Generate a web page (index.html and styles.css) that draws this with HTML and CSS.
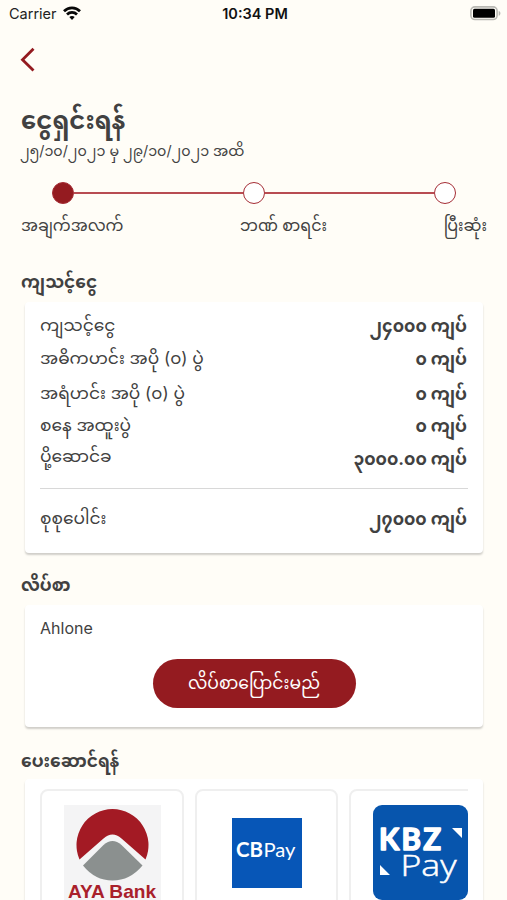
FILE: index.html
```html
<!DOCTYPE html>
<html lang="my">
<head>
<meta charset="utf-8">
<title>ငွေရှင်းရန်</title>
<link rel="stylesheet" href="styles.css">
</head>
<body>
<div class="status">
  <div class="carrier"><span>Carrier</span>
    <svg width="18" height="15" viewBox="0 0 18 15" fill="none" stroke="#080808" stroke-width="2.7"><path d="M1 5.200C5.400.7 12.600.7 17 5.200"/><path d="M4 8.500c2.800-2.800 7.200-2.800 10 0"/><path d="M9 14l-2.700-2.900c1.500-1.400 3.900-1.400 5.400 0z" fill="#080808" stroke="none"/></svg>
  </div>
  <span class="time">10:34 PM</span>
  <svg class="battery" width="31" height="15" viewBox="0 0 31 15"><rect x=".9" y=".9" width="26.200" height="12.600" rx="4" fill="#fffdf7" stroke="#b9b8b3" stroke-width="1.600"/><rect x="3" y="2.700" width="22" height="9" rx="1.500" fill="#000"/><path d="M28.700 5c2.300.7 2.300 4 0 4.800z" fill="#b9b8b3"/></svg>
</div>
<div class="back"><svg width="16" height="26" viewBox="0 0 16 26" fill="none" stroke="#941b20" stroke-width="2.800"><path d="M13.500 1.700 2.500 12.800l11 10.800"/></svg></div>
<h1><span>ငွေရှင်းရန်</span></h1>
<p class="dates"><span>၂၅/၁၀/၂၀၂၁ မှ ၂၉/၁၀/၂၀၂၁ အထိ</span></p>
<div class="steps"><i class="dot done"></i><i class="line"></i><i class="dot"></i><i class="line"></i><i class="dot"></i></div>
<div class="step-labels"><span>အချက်အလက်</span><span>ဘဏ် စာရင်း</span><span>ပြီးဆုံး</span></div>
<h2 class="cost-title"><span>ကျသင့်ငွေ</span></h2>
<section class="card cost">
  <div class="row"><span>ကျသင့်ငွေ</span><b>၂၄၀၀၀ ကျပ်</b></div>
  <div class="row"><span>အဓိကဟင်း အပို (၀) ပွဲ</span><b>၀ ကျပ်</b></div>
  <div class="row extra"><span>အရံဟင်း အပို (၀) ပွဲ</span><b>၀ ကျပ်</b></div>
  <div class="row weekend"><span>စနေ အထူးပွဲ</span><b>၀ ကျပ်</b></div>
  <div class="row delivery"><span>ပို့ဆောင်ခ</span><b>၃၀၀၀.၀၀ ကျပ်</b></div>
  <div class="row total"><span>စုစုပေါင်း</span><b>၂၇၀၀၀ ကျပ်</b></div>
</section>
<h2 class="address-title"><span>လိပ်စာ</span></h2>
<section class="card address">
  <div class="place">Ahlone</div>
  <button><span>လိပ်စာပြောင်းမည်</span></button>
</section>
<h2 class="pay-title"><span>ပေးဆောင်ရန်</span></h2>
<section class="card pay">
  <div class="tiles">
    <div class="tile"><svg class="aya" width="97" height="110" viewBox="0 0 97 110"><rect width="97" height="110" fill="#f4f4f5"/><path d="M15.500 54.500A36 36 0 1 1 81.500 54.500L57.500 33.500Q48.500 25.500 39.500 33.500Z" fill="#a31a24"/><path d="M19 60.500 39.500 40Q48.500 32 57.500 40L78.500 60.500Q66 75.500 48.500 75.500 31 75.500 19 60.500Z" fill="#8b908f"/><text x="48" y="93" text-anchor="middle" textLength="88" lengthAdjust="spacingAndGlyphs" class="aya-text">AYA Bank</text></svg></div>
    <div class="tile"><svg class="cb" width="70" height="70" viewBox="0 0 70 70"><rect width="70" height="70" fill="#0756b7"/><text x="4" y="39" textLength="27" lengthAdjust="spacingAndGlyphs" class="cb-bold">CB</text><text x="31.500" y="39" textLength="32" lengthAdjust="spacingAndGlyphs" class="cb-light">Pay</text></svg></div>
    <div class="tile"><svg class="kbz" width="95" height="95" viewBox="0 0 95 95"><rect width="95" height="95" rx="9" fill="#0755ad"/><text x="6" y="45" class="kbz-bold">KBZ</text><text x="27.500" y="70.500" textLength="56" lengthAdjust="spacingAndGlyphs" class="kbz-light">Pay</text><path d="M79 23h10v10zM7 60v10h10z" fill="#fff"/></svg></div>
  </div>
</section>
</body>
</html>
```
FILE: styles.css
```css
*{box-sizing:border-box}
body{margin:0;width:507px;height:900px;overflow:hidden;background:#fffdf7;color:#414141;font-family:Inter,"Noto Sans Myanmar","Noto Sans",sans-serif;font-size:17px}
h1,h2,p{margin:0;white-space:nowrap}
svg{display:block;flex:none}
.status{height:28px;display:grid;grid-template-columns:1fr auto 1fr;align-items:center;padding:0 6px 0 9px;color:#222}
.carrier{display:flex;gap:6px;font-size:14.500px;align-items:center;padding-bottom:2px}
.time{font-size:14.500px;font-weight:600;color:#111;padding-bottom:1px}
.battery{justify-self:end;margin-top:-1px}
.back{height:71px;padding:19px 0 0 20px}
h1{height:42px;padding-left:21px;font-size:24.300px;line-height:42px}
.dates{height:19px;padding-left:20px;font-size:14.300px;line-height:19px}
.steps{height:60px;display:flex;align-items:center;padding:0 51px 0 52px;margin-top:3px}
.dot{width:22px;height:22px;border:1.500px solid #a52d35;border-radius:50%;background:#fff}
.done{background:#941b20}
.line{flex:1;height:1.500px;background:#b84c52}
.step-labels{height:24px;display:flex;justify-content:space-between;padding:0 20px 0 21px;font-size:15.900px;line-height:26px;white-space:nowrap;margin-top:-10px}
h2{padding-left:21px;font-size:17px;line-height:26px;height:26px}
.cost-title{margin-top:32px}
.card{margin:0 24px 0 25px;padding:0 15px;background:#fff;border-radius:4px;box-shadow:0 2px 2px #00000030}
.cost{margin-top:7px;height:251px;padding-top:7px}
.row{height:33px;display:flex;justify-content:space-between;align-items:center;line-height:33px;white-space:nowrap}
.row b{font-size:17.100px;margin-right:1px}
.extra{height:36px}
.weekend{height:28px}
.delivery{height:37px}
.delivery span{margin-top:-2px}
.delivery b{margin-top:1px}
.total{border-top:1px solid #d8d8d8;height:60px;margin-top:12px}
.address-title{margin-top:19px}
.address{margin-top:7px;height:122px;padding-top:13px;display:flex;flex-direction:column}
.place{font-size:16px;line-height:20px}
button{width:203px;height:49px;margin:21px auto 0;border:0;border-radius:25px;background:#941b20;color:#fff;font:inherit;font-size:17.200px;padding:0}
button span{display:block;padding-top:2px}
.pay-title{margin-top:21px}
.pay{margin-top:5px;height:140px;padding-top:10px}
.tiles{display:flex;gap:11px;overflow:hidden}
.tile{flex:0 0 143.500px;height:150px;border:2px solid #efefef;border-radius:8px}
.aya{margin:14px 0 0 22px}
.cb{margin:27px 0 0 35px}
.kbz{margin:14px 0 0 22px}
.aya-text{font:bold 18.500px "Liberation Sans",sans-serif;fill:#a9202b}
.cb-bold{font:bold 20.500px Lato,sans-serif;fill:#fff}
.cb-light{font:20px Lato,sans-serif;fill:#fff}
.kbz-bold{font:bold 29.500px Lato,sans-serif;letter-spacing:2.300px;fill:#fff;stroke:#fff;stroke-width:1.500px;stroke-linejoin:round}
.kbz-light{font:300 29px "Open Sans",sans-serif;fill:#fff;stroke:#fff;stroke-width:.5px}
```
